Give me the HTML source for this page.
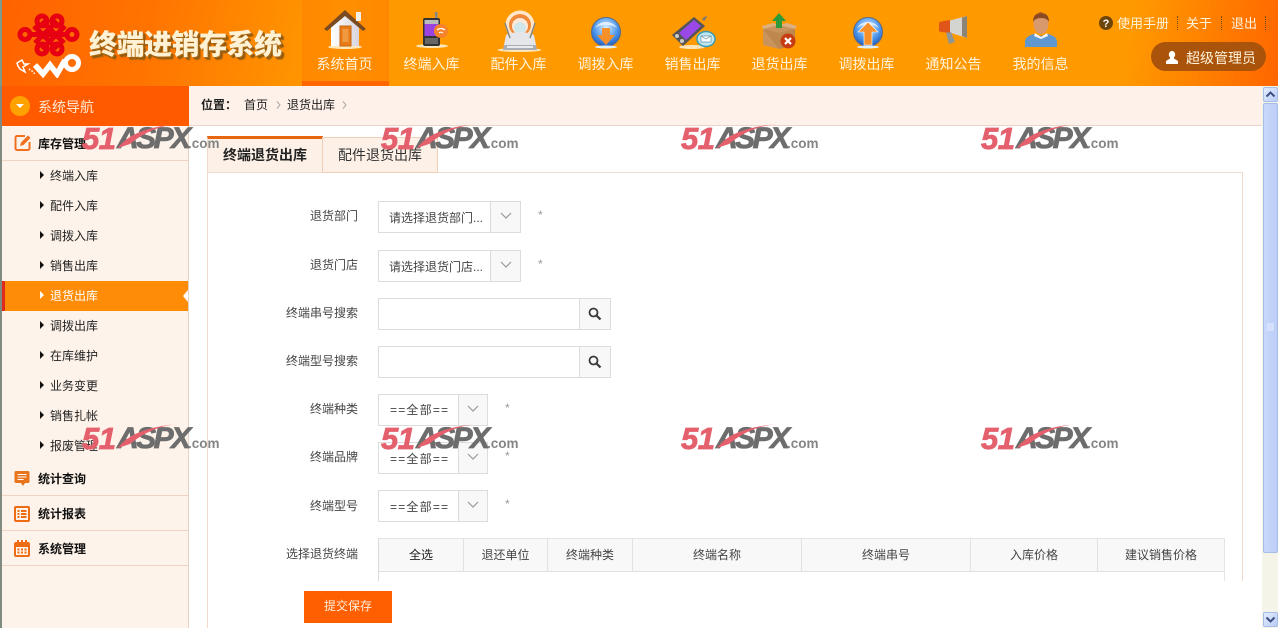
<!DOCTYPE html>
<html lang="zh-CN"><head><meta charset="utf-8"><title>终端进销存系统</title>
<style>
*{box-sizing:border-box;margin:0;padding:0}
html,body{width:1280px;height:628px;overflow:hidden;background:#fff}
body{position:relative;font:12px/16px "Liberation Sans","Noto Sans CJK SC",sans-serif;color:#333}
div,span,svg{position:absolute}
.t{white-space:nowrap}
#hd{left:0;top:0;width:1278px;height:86px;background:linear-gradient(100deg,#ff6200 0,#ff7400 12%,#ff9400 24%,#ff9900 30%,#ff9900 88%,#ff6600 100%)}
.nav{top:55px;width:87px;margin-left:-1px;text-align:center;font-size:14px;line-height:18px;color:#fff3dc;white-space:nowrap}
.ic{top:6px}
.side{left:50px;font-size:12px;line-height:16px;color:#222;white-space:nowrap}
.ar{left:40px;width:0;height:0;border-left:4px solid #111;border-top:4px solid transparent;border-bottom:4px solid transparent}
.sec{left:38px;font-weight:700;font-size:12px;line-height:16px;color:#111;white-space:nowrap}
.ln{left:2px;width:186px;height:1px;background:#f0d3c0}
.lb{left:258px;width:100px;text-align:right;font-size:12px;line-height:16px;color:#444;white-space:nowrap}
.bx{left:378px;border:1px solid #dcdcdc;background:#fff}
.bt{top:0;bottom:0;right:0;background:#f8f8f8;border-left:1px solid #dcdcdc}
.st{left:10px;top:8px;font-size:12px;line-height:16px;color:#444;white-space:nowrap}
.star{font-size:12px;color:#999;line-height:14px}
.th{top:538px;height:34px;background:#f8f8f8;border-top:1px solid #e4e4e4;border-bottom:1px solid #e0e0e0;border-right:1px solid #e2e2e2;text-align:center;line-height:33px;font-size:12px;color:#444;white-space:nowrap}
.wm{width:140px;height:30px}
.wm .n{left:0;top:1px;font:italic 700 31px/30px "Liberation Sans",sans-serif;color:#e4606c;-webkit-text-stroke:.8px #e4606c;letter-spacing:-.5px}
.wm .x{left:35px;top:1px;font:italic 700 30px/30px "Liberation Sans",sans-serif;color:#6d6d6d;letter-spacing:-2.500px;-webkit-text-stroke:.8px #6d6d6d}
.wm .c{left:106px;top:11px;font:700 13.500px/20px "Liberation Sans",sans-serif;color:#858585}
.wm svg{left:34px;top:0}
.dot{top:16px;height:14px;width:0;border-left:1px dotted #7a4a10}
</style></head><body>

<div style="left:0;top:0;width:2px;height:628px;background:#7f8a80"></div>
<div id="hd"></div>
<div style="left:0;top:0;width:2px;height:86px;background:#7f9a88"></div>

<!-- logo -->
<svg style="left:14px;top:12px" width="72" height="66" viewBox="0 0 72 66">
 <g fill="none" stroke="#e60012" stroke-width="5">
  <circle cx="28" cy="9" r="5"/><circle cx="43" cy="9" r="5"/>
  <circle cx="28" cy="37" r="5"/><circle cx="43" cy="37" r="5"/>
  <circle cx="11" cy="22.500" r="5"/><circle cx="58" cy="22.500" r="5"/>
  <path d="M28 9L50 31M43 9L21 31M20 14L43 37M51 14L28 37M16 22.500H53"/>
 </g>
 <path d="M21 53L29 62L36 53L43 62L51 48" fill="none" stroke="#fff" stroke-width="5.500"/>
 <circle cx="58" cy="51" r="6.500" fill="none" stroke="#fff" stroke-width="5"/>
 <path d="M3 51l5-3 2 4 4 0-5 3 2 5-5-3-2-3z" fill="none" stroke="#fff" stroke-width="1.500"/>
 <path d="M15 57l3 2 3 3" stroke="#fff" stroke-width="1.500" stroke-dasharray="1.500 1.500" fill="none"/>
</svg>
<div class="t" style="left:89px;top:27px;font-size:28px;line-height:36px;font-weight:900;color:#fff2d4;letter-spacing:-.500px;text-shadow:1px 1px 0 #b06a10,2px 2px 0 #8c5a12,3px 3px 1px #a06010">终端进销存系统</div>

<!-- active nav -->
<div style="left:302px;top:0;width:87px;height:86px;background:linear-gradient(90deg,#ff8800,#ff8f00 50%,#ff8800)"></div>
<div style="left:302px;top:81px;width:87px;height:5px;background:#ff6600"></div>

<!-- nav icons -->
<svg class="ic" style="left:322px;top:8px" width="46" height="42" viewBox="0 0 46 42">
 <defs><linearGradient id="w" x1="0" x2="1"><stop offset="0" stop-color="#fff"/><stop offset="1" stop-color="#d8d4de"/></linearGradient></defs>
 <ellipse cx="23" cy="39" rx="17" ry="2" fill="#ffe6b8"/>
 <path d="M9 18L23 7l14 11v20H9z" fill="url(#w)"/>
 <path d="M2 21L23 2l21 19-3 2L23 8 5 23z" fill="#7a4a22"/>
 <rect x="34" y="4" width="5" height="9" fill="#f4eee8"/>
 <rect x="18" y="18" width="11" height="20" fill="#e87a18" stroke="#c76512"/>
 <rect x="20.500" y="21" width="6" height="13" fill="#f09a40"/>
</svg>
<svg class="ic" style="left:412px;top:12px" width="42" height="40" viewBox="0 0 42 40">
 <ellipse cx="20" cy="34" rx="16" ry="2" fill="#ffe6b8"/>
 <rect x="23" y="0" width="2.500" height="8" fill="#888"/>
 <rect x="11" y="6" width="17" height="28" rx="2" fill="#333"/>
 <rect x="12.500" y="8" width="14" height="4" fill="#bbb"/>
 <rect x="12.500" y="12" width="14" height="12" fill="#9b43e0"/>
 <rect x="13" y="26" width="13" height="6" fill="#666"/>
 <circle cx="29" cy="19" r="7" fill="#f6822a"/>
 <path d="M25 18a6 6 0 0 1 8 0M27 21a3 3 0 0 1 4 0" stroke="#fff" fill="none" stroke-width="1.300"/>
</svg>
<svg class="ic" style="left:497px;top:9px" width="46" height="44" viewBox="0 0 46 44">
 <ellipse cx="22.500" cy="41" rx="22" ry="2" fill="#ffe6b8"/>
 <circle cx="23" cy="16" r="14.500" fill="#ffe8c8"/>
 <circle cx="23" cy="16" r="11" fill="#f08a3a"/>
 <circle cx="23" cy="17" r="8" fill="#ffe8d8"/>
 <circle cx="23" cy="19" r="6" fill="#cfe6ea"/>
 <path d="M6 41L9 26Q23 20 37 26L40 41Z" fill="#e4e6ea"/>
 <path d="M8 14l5 15M38 14l-5 15" stroke="#888" stroke-width="1.500"/>
 <path d="M7 36h32l1 5H6z" fill="#a8aeb4"/>
 <path d="M10 37h26v2H10z" fill="#e8eaec"/>
</svg>
<svg class="ic" style="left:590px;top:16px" width="32" height="34" viewBox="0 0 32 34">
 <defs><radialGradient id="b" cx=".5" cy=".35" r=".7"><stop offset="0" stop-color="#d8f0ff"/><stop offset=".6" stop-color="#4a94ea"/><stop offset="1" stop-color="#1a50b0"/></radialGradient></defs>
 <circle cx="16" cy="16" r="14.500" fill="url(#b)" stroke="#5a6a8a"/>
 <path d="M5 12a12 10 0 0 1 22 0a13 7 0 0 0-22 0" fill="#fff" opacity=".7"/>
 <path d="M12 12h8v7h5l-9 10-9-10h5z" fill="#f8902a"/>
 <ellipse cx="16" cy="31" rx="11" ry="1.500" fill="#dff0f8"/>
</svg>
<svg class="ic" style="left:670px;top:14px" width="48" height="38" viewBox="0 0 48 38">
 <ellipse cx="22" cy="33" rx="13" ry="2" fill="#ffe6b8"/>
 <path d="M2 21L24 3l11 9-22 20z" fill="#555"/>
 <path d="M9 19L24 6l7 6-15 14z" fill="#9a48e8"/>
 <path d="M32 5l4-3 1 1-3 4z" fill="#777"/>
 <circle cx="7" cy="22" r="2" fill="#ccc"/><circle cx="12" cy="27" r="2" fill="#ccc"/>
 <ellipse cx="36" cy="25" rx="9" ry="7.500" fill="#bfe6f0" stroke="#3a9ab0" stroke-width="1.500"/>
 <rect x="31" y="22" width="10" height="6" fill="#fff" stroke="#5a8aa0" stroke-width=".7"/>
 <path d="M31 22l5 3 5-3" fill="none" stroke="#5a8aa0" stroke-width=".7"/>
</svg>
<svg class="ic" style="left:761px;top:12px" width="40" height="38" viewBox="0 0 40 38">
 <path d="M2 17l16-4 16 4v16l-16 4-16-4z" fill="#c8935c"/>
 <path d="M2 17l16 4 16-4v16l-16 4z" fill="#b87e44" opacity=".6"/>
 <path d="M2 17l-1-3 11-3 6 2zM34 17l2-3-10-3-8 2z" fill="#dcb080"/>
 <path d="M18 1l7 8h-4v7h-6V9h-4z" fill="#2e9a3a"/>
 <circle cx="27" cy="29" r="7.500" fill="#c83c14"/>
 <path d="M24 26l6 6M30 26l-6 6" stroke="#fff" stroke-width="2.200"/>
</svg>
<svg class="ic" style="left:852px;top:16px" width="32" height="34" viewBox="0 0 32 34">
 <circle cx="16" cy="16" r="14.500" fill="url(#b)" stroke="#5a6a8a"/>
 <path d="M5 12a12 10 0 0 1 22 0a13 7 0 0 0-22 0" fill="#fff" opacity=".7"/>
 <path d="M16 6l10 10h-6v13h-8V16H6z" fill="#f8902a" stroke="#fff" stroke-width=".6"/>
 <ellipse cx="16" cy="31" rx="11" ry="1.500" fill="#dff0f8"/>
</svg>
<svg class="ic" style="left:937px;top:15px" width="34" height="32" viewBox="0 0 34 32">
 <path d="M11 6L30 1v22L11 17z" fill="#d4d4d0"/>
 <path d="M25 2.500l5-1.500v22l-5-2z" fill="#8d8478"/>
 <path d="M2 9q0-2 2-2.500L13 5v13l-9-1q-2-.5-2-2z" fill="#e0561a"/>
 <path d="M9 18l3 11 6-2-4-10z" fill="#8f9696"/>
</svg>
<svg class="ic" style="left:1024px;top:12px" width="34" height="36" viewBox="0 0 34 36">
 <path d="M1 35v-6q1-5 9-7l7 2 7-2q8 2 9 7v6z" fill="#5f97d0"/>
 <path d="M11 21l6 4 6-4 1 3-7 3-7-3z" fill="#f4f4f4"/>
 <ellipse cx="17" cy="12" rx="7.500" ry="10" fill="#d89a6c"/>
 <path d="M9 10q0-9 8-9t8 9q-2-4-8-4t-8 4z" fill="#8b4a22"/>
 <path d="M14 1l3-1 3 2z" fill="#a4582a"/>
</svg>

<div class="nav" style="left:302px">系统首页</div>
<div class="nav" style="left:389px">终端入库</div>
<div class="nav" style="left:476px">配件入库</div>
<div class="nav" style="left:563px">调拨入库</div>
<div class="nav" style="left:650px">销售出库</div>
<div class="nav" style="left:737px">退货出库</div>
<div class="nav" style="left:824px">调拨出库</div>
<div class="nav" style="left:911px">通知公告</div>
<div class="nav" style="left:998px">我的信息</div>

<!-- top right -->
<svg style="left:1099px;top:16px" width="14" height="14" viewBox="0 0 14 14"><circle cx="7" cy="7" r="7" fill="#6e4408"/><text x="7" y="11" text-anchor="middle" font-family="Liberation Sans" font-weight="700" font-size="11" fill="#fff">?</text></svg>
<div class="t" style="left:1117px;top:15px;font-size:13px;line-height:17px;color:#fff3dc">使用手册</div>
<div class="dot" style="left:1177px"></div>
<div class="t" style="left:1186px;top:15px;font-size:13px;line-height:17px;color:#fff3dc">关于</div>
<div class="dot" style="left:1221px"></div>
<div class="t" style="left:1231px;top:15px;font-size:13px;line-height:17px;color:#fff3dc">退出</div>
<div class="dot" style="left:1265px"></div>
<div style="left:1151px;top:42px;width:115px;height:29px;border-radius:15px;background:#a9540a"></div>
<svg style="left:1165px;top:51px" width="14" height="13" viewBox="0 0 14 13"><path d="M7 0a3.200 3.500 0 0 1 2 6.200V7.500L13 10v3H1v-3l4-2.500V6.200A3.200 3.500 0 0 1 7 0z" fill="#fff"/></svg>
<div class="t" style="left:1186px;top:49px;font-size:14px;line-height:18px;color:#fff3dc">超级管理员</div>

<!-- sidebar -->
<div style="left:2px;top:86px;width:187px;height:542px;background:#fef3ea;border-right:1px solid #e6d2c4"></div>
<div style="left:2px;top:86px;width:187px;height:40px;background:#ff5a00"></div>
<div style="left:10px;top:96px;width:20px;height:20px;border-radius:50%;background:#ffa100"></div>
<div style="left:16px;top:104px;width:0;height:0;border-top:4px solid #fff;border-left:4px solid transparent;border-right:4px solid transparent"></div>
<div class="t" style="left:38px;top:98px;font-size:14px;line-height:18px;color:#ffe8d0">系统导航</div>

<svg style="left:14px;top:134px" width="18" height="18" viewBox="0 0 18 18"><path d="M11 2H3a1.500 1.500 0 0 0-1.500 1.500v11A1.500 1.500 0 0 0 3 16h11a1.500 1.500 0 0 0 1.500-1.500V8" fill="none" stroke="#f07020" stroke-width="2"/><path d="M6 12l1-3.500L14 1.500l2.500 2.500-7 7z" fill="#f07020"/></svg>
<div class="sec" style="top:136px">库存管理</div>
<div class="ln" style="top:160px"></div>

<div class="ar" style="top:171px"></div><div class="side" style="top:168px">终端入库</div>
<div class="ar" style="top:201px"></div><div class="side" style="top:198px">配件入库</div>
<div class="ar" style="top:231px"></div><div class="side" style="top:228px">调拨入库</div>
<div class="ar" style="top:261px"></div><div class="side" style="top:258px">销售出库</div>
<div style="left:2px;top:281px;width:186px;height:30px;background:#ff8c06"></div>
<div style="left:2px;top:281px;width:3px;height:30px;background:#e02a1c"></div>
<div style="left:183px;top:290px;width:0;height:0;border-right:5px solid #fff;border-top:6px solid transparent;border-bottom:6px solid transparent"></div>
<div class="ar" style="top:291px;border-left-color:#fff"></div><div class="side" style="top:288px;color:#fff">退货出库</div>
<div class="ar" style="top:321px"></div><div class="side" style="top:318px">调拨出库</div>
<div class="ar" style="top:351px"></div><div class="side" style="top:348px">在库维护</div>
<div class="ar" style="top:381px"></div><div class="side" style="top:378px">业务变更</div>
<div class="ar" style="top:411px"></div><div class="side" style="top:408px">销售扎帐</div>
<div class="ar" style="top:441px"></div><div class="side" style="top:438px">报废管理</div>

<svg style="left:14px;top:470px" width="16" height="17" viewBox="0 0 16 17"><path d="M2 1h12a1.500 1.500 0 0 1 1.500 1.500v9A1.500 1.500 0 0 1 14 13h-3l-2 3-2-3H2A1.500 1.500 0 0 1 .5 11.500v-9A1.500 1.500 0 0 1 2 1z" fill="#e8741c"/><path d="M3.500 4.500h9M3.500 7h9M3.500 9.500h6" stroke="#fff" stroke-width="1"/></svg>
<div class="sec" style="top:471px">统计查询</div>
<div class="ln" style="top:495px"></div>
<svg style="left:14px;top:506px" width="16" height="16" viewBox="0 0 16 16"><rect width="16" height="16" rx="2" fill="#ee6c16"/><rect x="2" y="2" width="12" height="12" fill="#fff3ea"/><path d="M3.500 4h2v2h-2zM3.500 7h2v2h-2zM3.500 10h2v2h-2zM7 4h5.500v2H7zM7 7h5.500v2H7zM7 10h5.500v2H7z" fill="#ee6c16"/></svg>
<div class="sec" style="top:506px">统计报表</div>
<div class="ln" style="top:530px"></div>
<svg style="left:14px;top:540px" width="16" height="17" viewBox="0 0 16 17"><rect y="2" width="16" height="15" rx="2" fill="#ee6c16"/><rect x="2" y="7" width="12" height="8" fill="#fff3ea"/><path d="M3 0h2v4H3zM7 0h2v4H7zM11 0h2v4h-2z" fill="#ee6c16"/><path d="M3.500 8.500h2v2h-2zM7 8.500h2v2H7zM10.500 8.500h2v2h-2zM3.500 11.500h2v2h-2zM7 11.500h2v2H7zM10.500 11.500h2v2h-2z" fill="#ee6c16"/></svg>
<div class="sec" style="top:541px">系统管理</div>
<div class="ln" style="top:565px"></div>

<!-- breadcrumb -->
<div style="left:189px;top:86px;width:1073px;height:40px;background:#fdf1e9;border-bottom:1px solid #ead5c8"></div>
<div class="t" style="left:201px;top:97px;font-weight:700;color:#222">位置：</div>
<div class="t" style="left:244px;top:97px;color:#222">首页</div>
<svg style="left:276px;top:101px" width="5" height="8"><path d="M1 .5l3 3.500-3 3.500" fill="none" stroke="#aaa"/></svg>
<div class="t" style="left:287px;top:97px;color:#222">退货出库</div>
<svg style="left:342px;top:101px" width="5" height="8"><path d="M1 .5l3 3.500-3 3.500" fill="none" stroke="#aaa"/></svg>

<!-- tabs + box -->
<div style="left:207px;top:172px;width:1036px;height:456px;border:1px solid #f0dccf;border-bottom:0"></div>
<div style="left:207px;top:136px;width:116px;height:37px;background:#fdf1e7;border-top:3px solid #e8650f;border-left:1px solid #f0dccf;border-right:1px solid #f0cfb8"></div>
<div style="left:322px;top:137px;width:116px;height:36px;background:#fdf1e7;border:1px solid #f0cfb8"></div>
<div style="left:208px;top:172px;width:114px;height:1px;background:#f0dccf"></div>
<div class="t" style="left:223px;top:146px;font-size:14px;line-height:18px;font-weight:700;color:#222">终端退货出库</div>
<div class="t" style="left:338px;top:146px;font-size:14px;line-height:18px;color:#333">配件退货出库</div>

<!-- form -->
<div class="lb" style="top:208px">退货部门</div>
<div class="bx" style="top:201px;width:143px;height:32px"><div class="st">请选择退货部门...</div><div class="bt" style="width:30px"><svg style="left:9px;top:10px" width="12" height="8"><path d="M1 1l5 5 5-5" fill="none" stroke="#999" stroke-width="1.200"/></svg></div></div>
<div class="star t" style="left:538px;top:208px">*</div>

<div class="lb" style="top:257px">退货门店</div>
<div class="bx" style="top:250px;width:143px;height:32px"><div class="st">请选择退货门店...</div><div class="bt" style="width:30px"><svg style="left:9px;top:10px" width="12" height="8"><path d="M1 1l5 5 5-5" fill="none" stroke="#999" stroke-width="1.200"/></svg></div></div>
<div class="star t" style="left:538px;top:257px">*</div>

<div class="lb" style="top:305px">终端串号搜索</div>
<div class="bx" style="top:298px;width:233px;height:32px"><div class="bt" style="width:31px"><svg style="left:8px;top:8px" width="14" height="14"><circle cx="5.500" cy="5.500" r="4" fill="none" stroke="#3a3a3a" stroke-width="1.800"/><path d="M8.500 8.500l4 4" stroke="#3a3a3a" stroke-width="2.200"/></svg></div></div>

<div class="lb" style="top:353px">终端型号搜索</div>
<div class="bx" style="top:346px;width:233px;height:32px"><div class="bt" style="width:31px"><svg style="left:8px;top:8px" width="14" height="14"><circle cx="5.500" cy="5.500" r="4" fill="none" stroke="#3a3a3a" stroke-width="1.800"/><path d="M8.500 8.500l4 4" stroke="#3a3a3a" stroke-width="2.200"/></svg></div></div>

<div class="lb" style="top:401px">终端种类</div>
<div class="bx" style="top:394px;width:110px;height:32px"><div class="st" style="left:11px;top:7px;letter-spacing:1.200px">==全部==</div><div class="bt" style="width:29px"><svg style="left:8px;top:10px" width="12" height="8"><path d="M1 1l5 5 5-5" fill="none" stroke="#999" stroke-width="1.200"/></svg></div></div>
<div class="star t" style="left:505px;top:401px">*</div>

<div class="lb" style="top:449px">终端品牌</div>
<div class="bx" style="top:442px;width:110px;height:32px"><div class="st" style="left:11px;letter-spacing:1.200px">==全部==</div><div class="bt" style="width:29px"><svg style="left:8px;top:10px" width="12" height="8"><path d="M1 1l5 5 5-5" fill="none" stroke="#999" stroke-width="1.200"/></svg></div></div>
<div class="star t" style="left:505px;top:449px">*</div>

<div class="lb" style="top:498px">终端型号</div>
<div class="bx" style="top:490px;width:110px;height:32px"><div class="st" style="left:11px;letter-spacing:1.200px">==全部==</div><div class="bt" style="width:29px"><svg style="left:8px;top:10px" width="12" height="8"><path d="M1 1l5 5 5-5" fill="none" stroke="#999" stroke-width="1.200"/></svg></div></div>
<div class="star t" style="left:505px;top:497px">*</div>

<div class="lb" style="top:546px">选择退货终端</div>
<div style="left:378px;top:538px;width:1px;height:43px;background:#dcdcdc"></div>
<div class="th" style="left:379px;width:85px;color:#222">全选</div>
<div class="th" style="left:464px;width:84px">退还单位</div>
<div class="th" style="left:548px;width:85px">终端种类</div>
<div class="th" style="left:633px;width:169px">终端名称</div>
<div class="th" style="left:802px;width:169px">终端串号</div>
<div class="th" style="left:971px;width:127px">入库价格</div>
<div class="th" style="left:1098px;width:127px">建议销售价格</div>
<div style="left:1224px;top:538px;width:1px;height:43px;background:#e4e4e4"></div>

<!-- bottom bar -->
<div style="left:208px;top:581px;width:1054px;height:47px;background:#fff"></div>
<div class="t" style="left:304px;top:591px;width:88px;height:32px;background:#ff5f00;color:#ffeedd;text-align:center;line-height:31px">提交保存</div>

<!-- scrollbar -->
<div style="left:1262px;top:86px;width:16px;height:542px;background:#f4f4e8"></div>
<div style="left:1263px;top:87px;width:15px;height:15px;background:linear-gradient(135deg,#e4ecff,#b8ccf6);border:1px solid #a8bce8;border-radius:2px"></div>
<svg style="left:1265px;top:90px" width="11" height="9"><path d="M1.500 6.500l4-4 4 4" fill="none" stroke="#3c4e80" stroke-width="2"/></svg>
<div style="left:1263px;top:103px;width:15px;height:450px;background:linear-gradient(90deg,#c8d8fc,#bccef8);border:1px solid #a8bce8;border-radius:2px"></div>
<svg style="left:1266px;top:323px" width="9" height="10"><path d="M1 1h7M1 3h7M1 5h7M1 7h7" stroke="#e8eeff"/></svg>
<div style="left:1263px;top:612px;width:15px;height:15px;background:linear-gradient(135deg,#e4ecff,#b8ccf6);border:1px solid #a8bce8;border-radius:2px"></div>
<svg style="left:1265px;top:615px" width="11" height="9"><path d="M1.500 2.500l4 4 4-4" fill="none" stroke="#3c4e80" stroke-width="2"/></svg>

<!-- watermarks -->
<div class="wm" style="left:82px;top:123px"><span class="n">51</span><span class="x">ASPX</span><span class="c">.com</span><svg width="66" height="27"><path d="M2 25Q16 5 62 1Q36 3 14 21z" fill="#e4606c"/></svg></div>
<div class="wm" style="left:381px;top:123px"><span class="n">51</span><span class="x">ASPX</span><span class="c">.com</span><svg width="66" height="27"><path d="M2 25Q16 5 62 1Q36 3 14 21z" fill="#e4606c"/></svg></div>
<div class="wm" style="left:681px;top:123px"><span class="n">51</span><span class="x">ASPX</span><span class="c">.com</span><svg width="66" height="27"><path d="M2 25Q16 5 62 1Q36 3 14 21z" fill="#e4606c"/></svg></div>
<div class="wm" style="left:981px;top:123px"><span class="n">51</span><span class="x">ASPX</span><span class="c">.com</span><svg width="66" height="27"><path d="M2 25Q16 5 62 1Q36 3 14 21z" fill="#e4606c"/></svg></div>
<div class="wm" style="left:82px;top:423px"><span class="n">51</span><span class="x">ASPX</span><span class="c">.com</span><svg width="66" height="27"><path d="M2 25Q16 5 62 1Q36 3 14 21z" fill="#e4606c"/></svg></div>
<div class="wm" style="left:381px;top:423px"><span class="n">51</span><span class="x">ASPX</span><span class="c">.com</span><svg width="66" height="27"><path d="M2 25Q16 5 62 1Q36 3 14 21z" fill="#e4606c"/></svg></div>
<div class="wm" style="left:681px;top:423px"><span class="n">51</span><span class="x">ASPX</span><span class="c">.com</span><svg width="66" height="27"><path d="M2 25Q16 5 62 1Q36 3 14 21z" fill="#e4606c"/></svg></div>
<div class="wm" style="left:981px;top:423px"><span class="n">51</span><span class="x">ASPX</span><span class="c">.com</span><svg width="66" height="27"><path d="M2 25Q16 5 62 1Q36 3 14 21z" fill="#e4606c"/></svg></div>

</body></html>
